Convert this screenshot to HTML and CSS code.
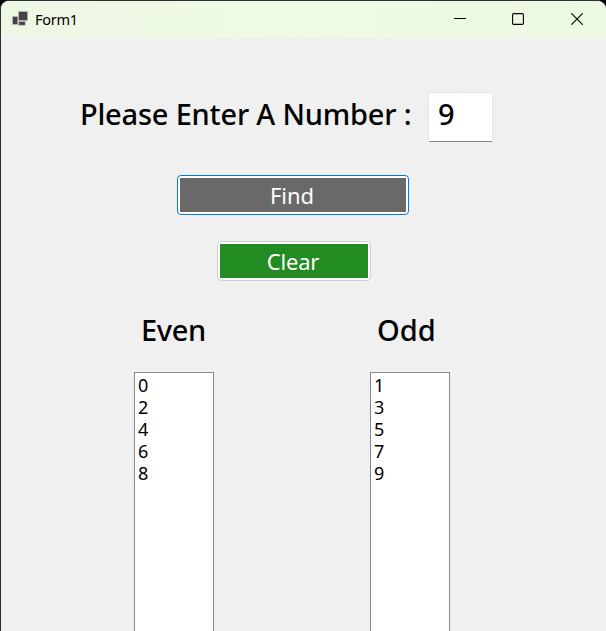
FILE: index.html
```html
<!DOCTYPE html>
<html lang="en">
<head>
<meta charset="utf-8">
<title>Form1</title>
<link rel="stylesheet" href="styles.css">
</head>
<body>
<div class="window">
  <header class="titlebar">
    <svg class="app-icon" width="17" height="16" viewBox="0 0 17 16">
      <g fill="#444347" stroke="#b9b4bd" stroke-width="0.7">
        <rect x="6.6" y="0.6" width="9" height="8.8"/>
        <rect x="0.6" y="5.6" width="5.2" height="7.8"/>
        <rect x="6.8" y="10.4" width="6.4" height="3.8"/>
      </g>
    </svg>
    <span class="title">Form1</span>
    <div class="controls">
      <svg class="control" width="12" height="12" viewBox="0 0 12 12"><path d="M0 5.5h12"/></svg>
      <svg class="control" width="12" height="12" viewBox="0 0 12 12"><rect x="0.6" y="0.6" width="10.8" height="10.8" rx="1.2"/></svg>
      <svg class="control close" width="12" height="12" viewBox="0 0 12 12"><path d="M0.3 0.3l11.4 11.4M11.7 0.3L0.3 11.7"/></svg>
    </div>
  </header>
  <main class="form">
    <div class="prompt">
      <label class="heading prompt-label" for="number">Please Enter A Number :</label>
      <input class="number" id="number" type="text" value="9">
    </div>
    <button class="button find"><span>Find</span></button>
    <button class="button clear"><span>Clear</span></button>
    <div class="results">
      <section class="column">
        <h2 class="heading even">Even</h2>
        <ul class="list"><li>0</li><li>2</li><li>4</li><li>6</li><li>8</li></ul>
      </section>
      <section class="column">
        <h2 class="heading odd">Odd</h2>
        <ul class="list"><li>1</li><li>3</li><li>5</li><li>7</li><li>9</li></ul>
      </section>
    </div>
  </main>
</div>
</body>
</html>
```

FILE: styles.css
```css
* { box-sizing: border-box; }
body {
  margin: 0;
  height: 631px;
  overflow: hidden;
  background: #000;
  color: #000;
  font-family: "Noto Sans", "Open Sans", sans-serif;
}
.window {
  height: 631px;
  display: flex;
  flex-direction: column;
  border: 1px solid #302d30;
  border-width: 1px 0 0 1px;
  border-radius: 9px 9px 0 0;
  background: #f0f0f0;
  overflow: hidden;
}
.titlebar {
  flex: none;
  height: 37px;
  display: flex;
  align-items: center;
  padding: 0 23px 0 11px;
  background: linear-gradient(90deg, #edf7e5, #effae3 50%, #edf8e2);
}
.app-icon { display: block; margin-top: -1px; }
.title { margin: -2px 0 0 6px; font-size: 14.5px; line-height: 20px; letter-spacing: -0.3px; }
.controls { display: flex; gap: 46px; margin: -1px 0 0 auto; }
.control { display: block; fill: none; stroke: #000; stroke-width: 1.1; }
.close { margin-left: 1px; }
.form {
  flex: 1;
  min-height: 0;
  display: flex;
  flex-direction: column;
  align-items: flex-start;
  padding-top: 54px;
}
.heading { margin: 0; font-size: 29px; font-weight: 500; line-height: 40px; letter-spacing: -0.2px; white-space: nowrap; }
.prompt { display: flex; padding-left: 79px; }
.prompt-label { width: 348px; padding-top: 2px; }
.number {
  width: 65px;
  height: 50px;
  border: 1px solid #e5e5e5;
  border-bottom-color: #868686;
  border-radius: 2px;
  background: #fff;
  padding: 0 0 7px 9px;
  font: 500 29px "Noto Sans", sans-serif;
  color: #000;
  outline: none;
}
.button {
  height: 40px;
  padding: 2px;
  border: 1px solid #d0ced0;
  border-radius: 4px;
  background: #fff;
  color: #fff;
  font: 400 22px/34px "Noto Sans", sans-serif;
}
.button span { display: block; height: 34px; }
.find { width: 232px; margin: 33px 0 0 176px; border-color: #0078d4; }
.find span { background: #696969; padding-right: 2px; }
.clear { width: 154px; margin: 26px 0 0 216px; letter-spacing: -0.2px; }
.clear span { background: #228b22; padding-right: 2px; }
.results { flex: 1; display: flex; gap: 156px; padding: 29px 0 0 133px; }
.column { width: 80px; display: flex; flex-direction: column; }
.even, .odd { padding-left: 7px; }
.even { letter-spacing: -0.4px; }
.odd { letter-spacing: 0; }
.list {
  flex: 1;
  margin: 22px 0 0;
  padding: 1px 0 0 3px;
  list-style: none;
  border: 1px solid #828790;
  border-bottom: 0;
  background: #fff;
  font-size: 18px;
  font-weight: 400;
  line-height: 22px;
}
```
